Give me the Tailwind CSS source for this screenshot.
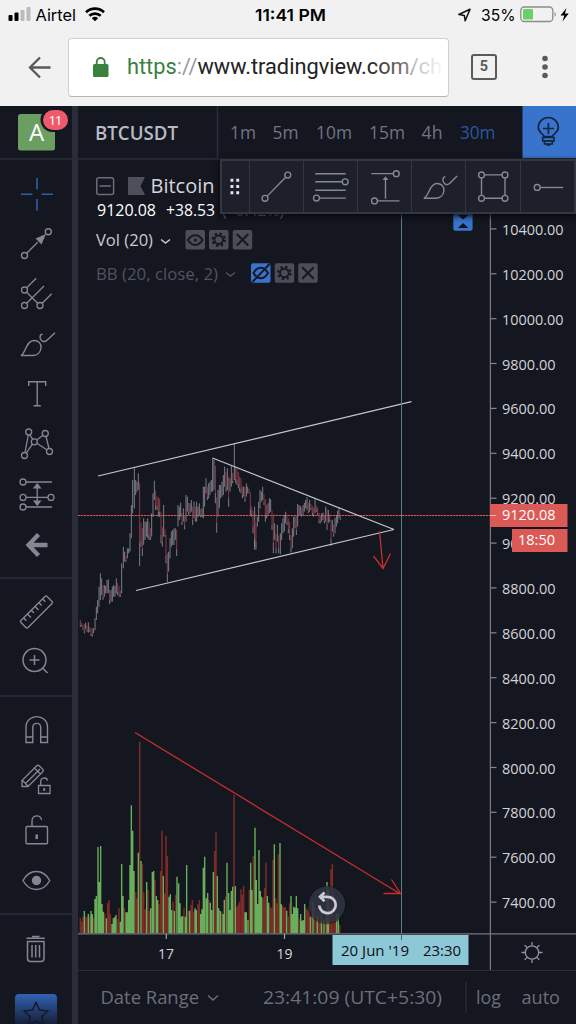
<!DOCTYPE html>
<html lang="en">
<head>
<meta charset="utf-8">
<title>BTCUSDT 9120.08</title>
<script src="https://cdn.jsdelivr.net/npm/@tailwindcss/browser@4"></script>
</head>
<body class="w-[576px] h-[1024px] overflow-hidden bg-[#141620] flex flex-col font-['Open_Sans','Noto_Sans',sans-serif]">

<header class="h-[106px] shrink-0 bg-[#f1f1f1] flex flex-col font-['Inter',sans-serif] text-black">
  <div class="h-[30px] shrink-0">
    <svg class="block" width="576" height="30" viewBox="0 0 576 30">
      <rect x="8.5" y="15" width="4" height="6" rx="1"/><rect x="14.5" y="12.500" width="4" height="8.500" rx="1"/>
      <rect x="20.500" y="10" width="4" height="11" rx="1" fill="#bbb"/><rect x="26.500" y="7" width="4" height="14" rx="1" fill="#bbb"/>
      <text x="35.500" y="20.800" font-size="16.500" textLength="40.500" lengthAdjust="spacingAndGlyphs">Airtel</text>
      <g fill="none" stroke="#000" stroke-width="2.700"><path d="M86 12.300a13 13 0 0 1 18 0"/><path d="M89.300 15.800a8.300 8.300 0 0 1 11.400 0"/></g>
      <path d="M91.800 18.300a4.700 4.700 0 0 1 6.400 0L95 21.300z"/>
      <text x="255" y="20.800" font-size="16.500" font-weight="600" textLength="71" lengthAdjust="spacingAndGlyphs">11:41 PM</text>
      <path d="M470 9.300l-11.200 5.200 5.500 .9 .9 5.400z" fill="none" stroke="#111" stroke-width="1.500" stroke-linejoin="round"/>
      <text x="481" y="20.800" font-size="16.500" textLength="34.500" lengthAdjust="spacingAndGlyphs">35%</text>
      <rect x="520.800" y="7" width="32" height="14.500" rx="3.500" fill="none" stroke="#8d8d8d" stroke-width="1.300"/>
      <rect x="523" y="9" width="10" height="10.500" rx="1" fill="#69d266"/>
      <path d="M554.500 12c1.800 .8 1.800 4 0 4.800z" fill="#8d8d8d"/>
      <path d="M566.500 8l-6 7.500h3.800l-1.800 6 6.200-8h-3.800z"/>
    </svg>
  </div>
  <div class="flex-1 flex items-start pt-2">
    <div class="w-[68px] h-[59px] pl-7 flex items-center">
      <svg width="24" height="24" viewBox="0 0 24 24" fill="none" stroke="#5a5a5a" stroke-width="2.300"><path d="M22.500 11.500H2.500M12 1.500L2 11.500l10 10"/></svg>
    </div>
    <div class="w-[381px] h-[59px] bg-white border border-[#d0d0d0] border-b-[#b5b5b5] rounded-[4px] flex items-center pl-6 overflow-hidden">
      <svg class="mr-[18px] shrink-0 -mt-[2px]" width="16" height="20" viewBox="0 0 16 20"><rect x="0" y="7" width="15.500" height="13" rx="1.500" fill="#3a803e"/><path d="M3.700 8V5a4 4 0 0 1 8 0v3" fill="none" stroke="#3a803e" stroke-width="1.800"/></svg>
      <svg class="shrink-0" width="318" height="36" viewBox="0 0 318 36">
        <defs><linearGradient id="fade" x1="240" x2="317" y1="0" y2="0" gradientUnits="userSpaceOnUse"><stop offset="0" stop-color="#222"/><stop offset=".5" stop-color="#777"/><stop offset=".62" stop-color="#bbb"/><stop offset="1" stop-color="#fff"/></linearGradient></defs>
        <text x="0" y="23.900" font-family="Roboto" font-size="22.500" fill="url(#fade)" textLength="315" lengthAdjust="spacingAndGlyphs"><tspan fill="#3a803e">https</tspan><tspan fill="#999">://</tspan>www.tradingview.com/ch</text>
      </svg>
    </div>
    <div class="ml-[22px] mt-4 w-[26px] h-[26px] border-[2.500px] border-[#5a5a5a] rounded-[3px] flex items-center justify-center font-['Roboto'] font-bold text-[14.5px] text-[#5a5a5a]">5</div>
    <svg class="ml-[42px] mt-[15px]" width="12" height="28" viewBox="0 0 12 28" fill="#5a5a5a"><circle cx="6" cy="5.500" r="2.800"/><circle cx="6" cy="14" r="2.800"/><circle cx="6" cy="22.500" r="2.800"/></svg>
  </div>
</header>

<div class="flex-1 min-h-0 flex">
  <aside class="w-[72px] shrink-0 flex flex-col text-[#848792] overflow-hidden">
    <div class="h-[54px] shrink-0 border-b-2 border-[#242733]">
      <svg class="block" width="72" height="52" viewBox="0 106 72 52">
        <rect x="18" y="114" width="37" height="36.500" rx="2.500" fill="#6b9e61"/>
        <text x="36.500" y="141" font-size="24" font-weight="500" fill="#fff" text-anchor="middle">A</text>
        <rect x="40.500" y="107.500" width="30" height="24.500" rx="12.200" fill="#141620"/>
        <rect x="43" y="110" width="25" height="20" rx="10" fill="#ec5a6c"/>
        <text x="55.500" y="125" font-size="13.500" fill="#fff" text-anchor="middle" textLength="14">11</text>
      </svg>
    </div>
    <div class="flex-1 flex flex-col pt-2 [&_svg]:shrink-0" id="tools">
      <svg width="72" height="50" viewBox="0 168 72 50" fill="none" stroke="#2d5fa8" stroke-width="1.600"><path d="M37 178v11.500M37 199v11.500M21 194.300h11.500M41.500 194.300H53"/></svg>
      <svg width="72" height="50" viewBox="0 218 72 50" fill="none" stroke="currentColor" stroke-width="1.400"><circle cx="24.500" cy="255.500" r="3"/><circle cx="48.300" cy="231.700" r="3"/><path d="M26.700 253.300l11-11"/><path d="M46 234l-10.500 4.500 6 6z" fill="currentColor" stroke="none"/></svg>
      <svg width="72" height="50" viewBox="0 268 72 50" fill="none" stroke="currentColor" stroke-width="1.300"><circle cx="24.500" cy="290" r="3"/><circle cx="24.500" cy="305.500" r="3"/><circle cx="40" cy="305.500" r="3"/><path d="M26.700 287.800l9.500-9.500M26.700 292.200l11 11M26.700 303.300L44 286M42.200 303.300l9.500-9.500"/></svg>
      <svg width="72" height="50" viewBox="0 318 72 50" fill="none" stroke="currentColor" stroke-width="1.400"><path d="M21 355.500c4.500-2 5-14.500 12.500-15 5-.2 8 3 7.500 7.500-.5 4.500-4 7.500-8.500 7.500zM42.500 334c-3 .5-3.500 5-.5 6.800 2 1.300 4 .5 5-.5l8-7.500"/></svg>
      <svg width="72" height="50" viewBox="0 368 72 50" fill="none" stroke="currentColor" stroke-width="1.400"><path d="M28.700 386v-4.300h17V386M37.200 381.700v24.300M33.500 405.800h7.300"/></svg>
      <svg width="72" height="50" viewBox="0 418 72 50" fill="none" stroke="currentColor" stroke-width="1.300"><circle cx="28.700" cy="432" r="3"/><circle cx="45.300" cy="433.500" r="3"/><circle cx="34.300" cy="441.800" r="3"/><circle cx="24.500" cy="455.500" r="3"/><circle cx="49.500" cy="451.500" r="3"/><path d="M28.300 435l-3.300 17.500M29.800 434.800l3 4.500M32.500 444.200l-6.300 9M36.700 440l6.300-4.800M46 436.500l3 12M37 443.200l10 6.800"/></svg>
      <svg width="72" height="50" viewBox="0 468 72 50" fill="none" stroke="currentColor" stroke-width="1.300"><circle cx="23" cy="482" r="3"/><circle cx="23" cy="497.400" r="3"/><circle cx="51" cy="497.400" r="3"/><circle cx="23" cy="507" r="3"/><path d="M26 482h26M26 497.400h22M26 507h26M37.200 487v14"/><path d="M37.200 484l3 3.800h-6zM37.200 505l3-3.800h-6z" fill="currentColor"/></svg>
      <svg width="72" height="50" viewBox="0 518 72 50" fill="none" stroke="currentColor" stroke-width="4.300"><path d="M47.500 545H30M38.500 534.500L28.500 545l10 10.500"/></svg>
      <div class="mt-[9px] h-[2px] shrink-0 bg-[#242733]"></div>
      <svg class="mt-[8px]" width="72" height="50" viewBox="0 587 72 50" fill="none" stroke="currentColor" stroke-width="1.400"><g transform="rotate(-45 36.500 612)"><rect x="18" y="607" width="37" height="10" rx="1.500"/><path d="M23.200 607v4M28.600 607v5M34 607v4M39.400 607v5M44.800 607v4M50 607v4"/></g></svg>
      <svg width="72" height="50" viewBox="0 637 72 50" fill="none" stroke="currentColor" stroke-width="1.500"><circle cx="34.500" cy="660" r="11.500"/><path d="M29.500 660h10M34.500 655v10M42.500 668l5 5"/></svg>
      <div class="mt-[8px] h-[2px] shrink-0 bg-[#242733]"></div>
      <svg class="mt-[8px]" width="72" height="50" viewBox="0 705 72 50" fill="none" stroke="currentColor" stroke-width="1.400"><path d="M26 742.500v-15c0-14.500 21.500-14.500 21.500 0v15h-6.800v-15c0-5.500-7.900-5.500-7.900 0v15zM26 737h6.800M40.700 737h6.800"/></svg>
      <svg width="72" height="50" viewBox="0 755 72 50" fill="none" stroke="currentColor" stroke-width="1.300"><path d="M22 786.500v-6L36.500 766q1.500-1.500 3 0l3 3q1.500 1.500 0 3L28 786.500zM22.500 780.500l5.500 5.500M25.500 783.500L40 769M34.500 768l6 6M38.500 785.500h11.500v8H38.500zM40.700 785v-3.500c0-4.500 6.300-4.500 6.800-.8"/><path d="M44.200 788v3" stroke-width="1.800"/></svg>
      <svg width="72" height="50" viewBox="0 805 72 50" fill="none" stroke="currentColor" stroke-width="1.400"><rect x="26" y="826.500" width="21.500" height="17.200" rx="1"/><path d="M32 826v-4.500c0-7.500 9-7 9.500-1.500"/><path d="M36.700 834.500v4.500" stroke-width="2.500"/></svg>
      <svg width="72" height="50" viewBox="0 855 72 50" fill="none" stroke="currentColor" stroke-width="1.400"><path d="M23 880.500c6.500-12 20-12 26.800 0-6.800 12-20.300 12-26.800 0z"/><circle cx="36.500" cy="880.500" r="4" fill="currentColor"/></svg>
      <div class="mt-[8px] h-[2px] shrink-0 bg-[#242733]"></div>
      <svg class="mt-[8px]" width="72" height="50" viewBox="0 923 72 50" fill="none" stroke="currentColor" stroke-width="1.500"><path d="M26.500 938.300h18.300M32 936.500h7.500M27.500 941.500h16.500v17q0 3-3 3H30.500q-3 0-3-3zM32 945v12.500M35.700 945v12.500M39.500 945v12.500"/></svg>
      <div class="mt-[21px] ml-[15px] w-[42px] h-[42px] shrink-0 rounded-[4px] bg-linear-to-b from-[#3263b4] to-[#16203a] to-[30px]">
        <svg class="block" width="42" height="42" viewBox="0 0 42 42" fill="none" stroke="#131a2c" stroke-width="1.500"><path d="M21 8.500l3.500 7.500 8.300 1-6 5.800 1.500 8.200-7.300-4-7.300 4 1.500-8.200-6-5.800 8.300-1z"/></svg>
      </div>
    </div>
  </aside>
  <div class="w-[6px] shrink-0 bg-[#2a2d39]"></div>

  <main class="flex-1 min-w-0 flex flex-col relative">
    <nav class="h-[54px] shrink-0 border-b-2 border-[#242733]">
      <svg class="block" width="498" height="52" viewBox="78 106 498 52" fill="#727581" font-size="19">
        <text x="95" y="139.500" font-size="20.500" font-weight="600" fill="#b9bbc4" textLength="83" lengthAdjust="spacingAndGlyphs">BTCUSDT</text>
        <path d="M217.500 106v52" stroke="#2a2d39" stroke-width="1.500"/>
        <text x="230" y="139.300" textLength="26" lengthAdjust="spacingAndGlyphs">1m</text>
        <text x="272.500" y="139.300" textLength="26" lengthAdjust="spacingAndGlyphs">5m</text>
        <text x="316" y="139.300" textLength="36" lengthAdjust="spacingAndGlyphs">10m</text>
        <text x="369" y="139.300" textLength="36" lengthAdjust="spacingAndGlyphs">15m</text>
        <text x="421.500" y="139.300" textLength="21" lengthAdjust="spacingAndGlyphs">4h</text>
        <text x="460" y="139.300" fill="#2c579c" textLength="35.500" lengthAdjust="spacingAndGlyphs">30m</text>
        <path d="M522.500 106H576v52h-53.500z" fill="#3873cc"/>
        <g fill="none" stroke="#16243f" stroke-width="1.700"><path d="M544 136.500c0-2.500-5.700-3.500-5.700-9a10 10 0 0 1 20 0c0 5.500-5.800 6.500-5.800 9z"/><path d="M548.400 123v11M543 128.500h11M542.700 137.500h11.300v3.300h-11.300zM544.500 141v3h7.800v-3M546.500 145h4"/></g>
      </svg>
    </nav>

    <section class="h-[810px] shrink-0 relative">
      <svg id="chart" class="block" width="498" height="810" viewBox="78 160 498 810">
        <path d="M78 515.500H490" stroke="#6e2a36" stroke-width="1"/>
        <path d="M78 515.500H490" stroke="#e0505a" stroke-width="1" stroke-dasharray="2 1"/>
        <path id="volRed" stroke="#7c2b26" stroke-width="1.500"/>
        <path id="volGreen" stroke="#69ae5b" stroke-width="1.400"/>
        <path id="up" stroke="#8f9098" stroke-width=".85"/>
        <path id="down" stroke="#8d3e48" stroke-width=".95"/>
        <g stroke="#c6c7cc" stroke-width="1.200" fill="none">
          <path d="M98 476L411.500 401.700M136 590.500L394 529.500M212.500 458L394 529.500"/>
        </g>
        <path d="M401.500 213V938" stroke="#58808c" stroke-width="1"/>
        <g stroke="#c92f2b" stroke-width="1.300" fill="none">
          <path d="M135 732.500L400.500 894M383.500 893.500h17l-9-14"/>
          <path d="M379.500 531L383 568.500M373.500 556l9.500 12.500 7.500-15"/>
        </g>
        <path d="M78 933.800H576M490.400 213V970" stroke="#74767f" stroke-width="1.300"/>
        <path d="M166.300 934v5M284.500 934v5" stroke="#a0a2a8" stroke-width="1.200"/>
        <g id="axis" font-size="15.300" fill="#d3d4d7"></g>
        <g fill="#d3d4d7" font-size="15.300">
          <text x="158" y="959" textLength="16" lengthAdjust="spacingAndGlyphs">17</text><text x="276.500" y="959" textLength="16" lengthAdjust="spacingAndGlyphs">19</text>
        </g>
        <path d="M490 504h77.500v23H490zM512 529h55.500v23H512z" fill="#dc5a56"/>
        <path d="M490 515.500h6" stroke="#f2b5b3"/>
        <g fill="#fff" font-size="15.300"><text x="502" y="520.200" textLength="53.500" lengthAdjust="spacingAndGlyphs">9120.08</text><text x="518" y="545" textLength="37" lengthAdjust="spacingAndGlyphs">18:50</text></g>
        <path d="M332.500 935h136v30h-136z" fill="#8dc8d6"/><path d="M401.500 934v6" stroke="#41656f"/>
        <g fill="#0c0f14" font-size="15"><text x="341" y="955.500" textLength="68" lengthAdjust="spacingAndGlyphs">20 Jun '19</text><text x="423" y="955.500" textLength="38" lengthAdjust="spacingAndGlyphs">23:30</text></g>
        <g fill="none" stroke="#9092a0" stroke-width="1.300"><circle cx="532" cy="952.500" r="6.700"/><path d="M532 942v3.500M532 959.500v3.500M521.500 952.500h3.500M539 952.500h3.500M524.600 945.100l2.400 2.400M537 957.500l2.400 2.400M524.600 959.900l2.400-2.400M537 947.500l2.400-2.400"/></g>
        <circle cx="327" cy="905" r="19.500" fill="#0c0e16" fill-opacity=".45"/>
        <circle cx="327" cy="904.500" r="18.200" fill="#333746" fill-opacity=".8"/>
        <path d="M319.300 905.500a8.200 8.200 0 1 0 7.700-8.700h-5M324.500 892.500l-4.500 4.300 4.500 4.500" fill="none" stroke="#c9cbd6" stroke-width="2.700"/>
        <rect x="453.300" y="211" width="19.300" height="19.800" rx="2" fill="#3873cc"/>
        <path d="M458 228l5-5 5.500 5zM458 215l5 4.500 5.500-4.500z" fill="#10131d"/>
      </svg>

      <svg class="absolute left-0 top-0" width="260" height="130" viewBox="78 160 260 130">
        <g fill="none" stroke="#6b6e79" stroke-width="1.500"><rect x="96.800" y="177.800" width="16.800" height="16.800" rx="2"/><path d="M99.500 186h11.500"/></g>
        <path d="M128 177h17l-4.500 9 4.500 9h-17z" fill="#4d505c"/>
        <text x="150.500" y="193.300" font-size="20" fill="#d5d6da" textLength="64" lengthAdjust="spacingAndGlyphs">Bitcoin</text>
        <g font-size="16" fill="#fff"><text x="97" y="215.700" textLength="59" lengthAdjust="spacingAndGlyphs">9120.08</text><text x="166" y="215.700" textLength="49" lengthAdjust="spacingAndGlyphs">+38.53</text></g>
        <text x="222" y="215.700" font-size="16" fill="#777a84" textLength="62" lengthAdjust="spacingAndGlyphs">(+0.42%)</text>
        <text x="96" y="246" font-size="16" fill="#c9cad0" textLength="57" lengthAdjust="spacingAndGlyphs">Vol (20)</text>
        <path d="M161 239.500l4.500 3.500 4.500-3.500" fill="none" stroke="#c9cad0" stroke-width="1.500"/>
        <text x="96" y="279.500" font-size="16" fill="#50535e" textLength="122" lengthAdjust="spacingAndGlyphs">BB (20, close, 2)</text>
        <path d="M226 272.500l4.500 3.500 4.500-3.500" fill="none" stroke="#50535e" stroke-width="1.500"/>
        <g fill="#4b4d57"><rect x="185.500" y="230" width="19.500" height="19.500" rx="2"/><rect x="209" y="230" width="19.500" height="19.500" rx="2"/><rect x="232.700" y="230" width="19.500" height="19.500" rx="2"/><rect x="274.700" y="263.200" width="19.500" height="19.500" rx="2"/><rect x="298.200" y="263.200" width="19.500" height="19.500" rx="2"/></g>
        <rect x="251" y="263.200" width="19.500" height="19.500" rx="2" fill="#3873cc"/>
        <g fill="none" stroke="#161924" stroke-width="2">
          <path d="M188 240c4-6.500 10.500-6.500 14.500 0-4 6.500-10.500 6.500-14.500 0z"/><circle cx="195.300" cy="240" r="1.600" fill="#161924" stroke="none"/>
          <circle cx="218.700" cy="239.800" r="4.300"/><circle cx="218.700" cy="239.800" r="6.200" stroke-dasharray="2.400 2.470" stroke-width="2.200"/>
          <path d="M236.800 234l11.500 11.500M248.300 234l-11.500 11.500M302.200 267.300l11.500 11.500M313.700 267.300l-11.500 11.500"/>
          <circle cx="284.400" cy="273" r="4.300"/><circle cx="284.400" cy="273" r="6.200" stroke-dasharray="2.400 2.470" stroke-width="2.200"/>
          <path d="M253.500 273c4-7 10.500-7 14.500 0-4 7-10.500 7-14.500 0zM252.500 282L269.500 264"/>
        </g>
      </svg>

      <div class="absolute left-[142px] -top-px w-[357px] h-[55px] flex bg-[#1d202b] border-2 border-[#333641] shadow-[0_2px_6px_#05060a] [&>svg]:shrink-0 [&>svg]:border-r [&>svg]:border-[#333641]" >
        <svg width="28" height="51" viewBox="222 161 28 51" fill="#e4e5e8"><path d="M230.800 178.500h3v3h-3zM236.800 178.500h3v3h-3zM230.800 185h3v3h-3zM236.800 185h3v3h-3zM230.800 191.500h3v3h-3zM236.800 191.500h3v3h-3z"/></svg>
        <svg width="54" height="51" viewBox="250 161 54 51" fill="none" stroke="#858993" stroke-width="1.400"><circle cx="265.300" cy="198.500" r="3"/><circle cx="288.500" cy="174.800" r="3"/><path d="M267.500 196.300L286.300 177"/></svg>
        <svg width="54" height="51" viewBox="304 161 54 51" fill="none" stroke="#858993" stroke-width="1.400"><circle cx="346" cy="181.700" r="3"/><circle cx="316.700" cy="198.300" r="3"/><path d="M315.500 173.500h31M315.500 181.700H343M315.500 190.300h31M319.700 198.300h26.800"/></svg>
        <svg width="54" height="51" viewBox="358 161 54 51" fill="none" stroke="#858993" stroke-width="1.400"><circle cx="397" cy="173.400" r="3"/><circle cx="374.800" cy="201.200" r="3"/><path d="M371.500 173.400H394M377.800 201.200h22.500M386 199v-20"/><path d="M386 176l3 3.800h-6z" fill="#858993" stroke="none"/></svg>
        <svg width="54" height="51" viewBox="412 161 54 51" fill="none" stroke="#858993" stroke-width="1.400"><path d="M424 198.500c5.500-2 5.500-14.500 13-15 5-.2 8 3 7.500 7.500-.5 4.500-4 7.500-8.500 7.500zM446 176.500c-3 .5-3.500 5-.5 7.300 2 1.300 4 .5 5-.5l7.500-7.500"/></svg>
        <svg width="55" height="51" viewBox="466 161 55 51" fill="none" stroke="#858993" stroke-width="1.400"><circle cx="481.800" cy="174.700" r="3"/><circle cx="505.700" cy="174.700" r="3"/><circle cx="481.800" cy="198.500" r="3"/><circle cx="505.700" cy="198.500" r="3"/><path d="M484.800 174.700h18M484.800 198.500h18M481.800 177.700v17.800M505.700 177.700v17.800"/></svg>
        <svg width="54" height="51" viewBox="521 161 54 51" fill="none" stroke="#858993" stroke-width="1.400"><circle cx="537.500" cy="187.500" r="3"/><path d="M540.500 187.500h23.500"/></svg>
      </div>
    </section>

    <footer class="flex-1 border-t border-[#2a2d39]">
      <svg class="block" width="498" height="53" viewBox="78 971 498 53" fill="#6c6f7a" font-size="18.800">
        <text x="100.500" y="1004.300" textLength="98.500" lengthAdjust="spacingAndGlyphs">Date Range</text>
        <path d="M208 995.500l5 4.500 5-4.500" fill="none" stroke="#6c6f7a" stroke-width="1.500"/>
        <text x="263" y="1004.300" textLength="179" lengthAdjust="spacingAndGlyphs">23:41:09 (UTC+5:30)</text>
        <path d="M466 982v31" stroke="#2a2d39" stroke-width="1.300"/>
        <text x="476" y="1004.300" textLength="25" lengthAdjust="spacingAndGlyphs">log</text>
        <text x="521.500" y="1004.300" textLength="38.500" lengthAdjust="spacingAndGlyphs">auto</text>
      </svg>
    </footer>
  </main>
</div>

<script>
// Volume bars: offset, top, direction (thirds of a pixel from the pane origin 76,720)
const volume = "13 595r,17 605r,21 590r,25 573g,29 590r,33 592r,37 582g,41 590r,45 573g,49 583g,53 595r,57 537g,61 528g,66 381g,70 486g,74 378g,78 552g,82 575g,86 580r,91 595g,95 550r,99 540r,103 582r,108 612g,112 595g,116 592g,120 585g,125 598r,129 563r,133 605g,137 432g,141 528g,145 565r,150 577g,154 577g,158 540g,162 435g,166 256g,170 332g,174 453g,179 517r,183 535r,187 398g,191 65r,195 423g,199 432r,203 517r,208 568r,212 486g,216 510r,220 573r,224 565g,229 456g,233 453g,237 480r,241 528g,245 540g,249 552r,254 453r,258 332r,262 468g,266 520r,270 347r,274 408r,279 530g,283 523g,287 570g,291 545r,295 573g,299 525r,303 470g,308 490g,312 550g,316 590g,320 588g,324 563r,328 590g,332 435g,337 573r,341 572g,345 555r,349 540r,353 575r,357 565g,361 570g,366 553r,370 540r,374 582g,378 568g,382 443g,386 410g,391 535g,395 519g,399 540r,403 548g,407 570g,412 456g,416 393r,420 337r,424 468g,428 565g,433 573g,437 575r,441 582g,445 540g,449 530r,453 428g,458 519g,462 570g,466 513g,470 500g,474 225r,478 498g,482 562r,486 555r,490 545r,495 508r,499 525r,503 497r,507 577g,511 577g,516 600g,520 510r,524 428g,528 510g,532 408r,537 323g,541 480g,545 552g,549 390g,553 513g,557 530g,562 535r,566 505r,570 428r,574 528g,578 548g,583 560r,587 565r,591 420r,595 373g,599 535r,603 550r,607 402r,612 369g,616 553g,620 558r,624 562r,628 562r,632 572g,637 590r,641 550r,645 528g,649 582g,653 560g,657 563g,661 528g,665 565g,670 598r,674 582g,678 602g,682 600g,686 552g,690 565r,695 570r,699 560r,703 590g,707 575r,711 545g,715 560r,720 590r,724 585g,728 560r,732 600r,736 560g,740 590r,744 600g,749 570r,753 486g,757 510g,761 560r,765 447r,769 432r,774 520r,778 600r,782 580g,787 582g,791 615r";
let vr = "", vg = "";
for (const b of volume.split(",")) {
  const [x, t] = b.split(" ");
  const d = `M${(76 + x / 3).toFixed(2)} ${(720 + parseInt(t) / 3).toFixed(1)}V933.3`;
  t.endsWith("r") ? vr += d : vg += d;
}
volRed.setAttribute("d", vr);
volGreen.setAttribute("d", vg);

// Price bars: offset, high, low
const early = "13 568 590,17 577 590,21 582 600,25 580 610,29 578 598,33 585 605,37 577 608,41 590 605,45 590 618,49 592 620,53 595 610,57 565 600,61 530 570,65 510 550,69 470 530,73 430 510,77 445 495,81 460 510,85 465 500,89 468 490,93 450 490,97 448 490,101 475 522,105 480 515,109 470 515,113 465 500,117 468 500,121 445 490,125 455 495,129 465 500,133 480 500,137 400 490,142 350 415,146 365 395,150 375 395,154 355 385,158 355 370,162 310 365,166 225 325,170 150 250,175 112 235,179 150 195,183 155 185,187 130 180,191 132 408,195 270 350,199 285 378,203 265 345,207 275 330,211 275 320,215 265 325,219 270 330,223 290 330,227 250 320,231 190 260,235 152 210,239 175 240,243 195 240,247 195 260,251 200 260,255 235 340,259 285 350,263 225 320,267 295 320,270 305 400,274 360 456,278 365 425,282 325 385,286 305 350,290 300 345,294 295 345,298 295 330,302 290 378,306 225 290,310 230 270,314 218 260,318 245 285,322 235 275,326 250 298,330 195 275,334 200 245,338 215 255,342 220 250,346 210 245,350 225 285,354 215 265,358 225 275,362 215 275,366 230 262,370 220 255,374 235 262,378 235 262,382 170 265,386 170 230,390 145 190,394 165 210,398 160 205,402 155 195,406 150 185,410 85 185,414 90 180,418 95 220,422 190 308,426 180 260,430 165 235,434 165 205,438 155 200,442 135 195,446 110 170,450 120 185,454 115 180,458 130 230,462 145 185,466 108 170,470 125 160,475 40 150,479 105 160,483 110 165,487 120 175,491 135 185,495 140 190,499 165 205,503 170 200,507 165 215,511 160 200,515 170 190,519 175 190,523 180 255,527 225 260,531 235 310,536 260 350";
const late = "104 350 480,108 390 478,112 380 410,116 335 395,120 300 355,124 305 335,128 290 330,132 310 345,136 320 395,140 340 385,144 340 375,148 325 370,152 328 365,156 355 420,160 360 490,164 400 450,168 425 490,172 405 455,176 430 490,181 430 493,185 400 450,189 385 430,193 375 425,197 365 400,201 370 405,205 380 430,209 390 450,213 430 488,217 415 475,221 380 440,225 380 415,229 370 435,233 342 410,237 345 375,241 348 375,245 350 380,249 345 375,253 338 365,257 330 355,261 322 360,265 335 370,269 330 365,273 340 360,277 345 375,281 350 380,285 325 370,289 345 365,293 350 375,297 365 400,301 375 400,305 370 395,309 368 390,313 372 400,317 350 395,321 350 420,325 360 400,329 370 395,333 380 468,337 390 425,341 400 440,345 385 430,349 375 410,353 362 400,357 352 385,361 370 390";
let u = "", dn = "", prev = 0;
for (const [s, ox, oy] of [[early, 76, 430], [late, 220, 390]]) {
  for (const b of s.split(",")) {
    const [x, h, l] = b.split(" ").map(Number);
    const X = (ox + x / 3).toFixed(2), H = oy + h / 3, L = oy + l / 3, mid = (H + L) / 2;
    const d = `M${X} ${H.toFixed(1)}V${L.toFixed(1)}`;
    if (mid > prev + .5) {
      dn += `M${X} ${(H + (L - H) * .1).toFixed(1)}V${(L - (L - H) * .25).toFixed(1)}`;
      u += `M${X} ${(L - (L - H) * .25).toFixed(1)}V${L.toFixed(1)}`;
    } else u += d;
    prev = mid;
  }
}
up.setAttribute("d", u);
down.setAttribute("d", dn);

// Price scale labels
let a = "";
for (let i = 0; i < 16; i++) {
  const y = (228.9 + i * 44.88).toFixed(1), p = 10400 - i * 200;
  a += `<path d="M490.500 ${y}h6" stroke="#85878f" stroke-width="1.200"/><text x="502" y="${(+y + 6).toFixed(1)}" textLength="${p > 9999 ? 61.5 : 53.5}" lengthAdjust="spacingAndGlyphs">${p}.00</text>`;
}
axis.innerHTML = a;
</script>
</body>
</html>
